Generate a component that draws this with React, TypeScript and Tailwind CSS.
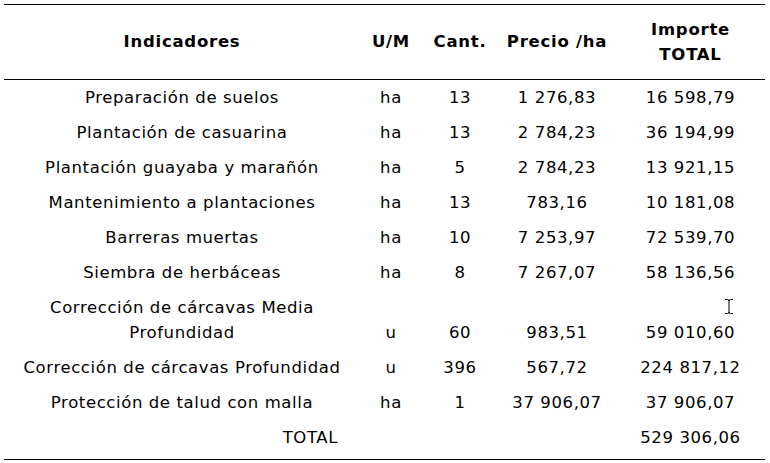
import React from "react";

const rows = [
  ["Preparación de suelos", "ha", "13", "1 276,83", "16 598,79"],
  ["Plantación de casuarina", "ha", "13", "2 784,23", "36 194,99"],
  ["Plantación guayaba y marañón", "ha", "5", "2 784,23", "13 921,15"],
  ["Mantenimiento a plantaciones", "ha", "13", "783,16", "10 181,08"],
  ["Barreras muertas", "ha", "10", "7 253,97", "72 539,70"],
  ["Siembra de herbáceas", "ha", "8", "7 267,07", "58 136,56"],
  ["Corrección de cárcavas Media Profundidad", "u", "60", "983,51", "59 010,60"],
  ["Corrección de cárcavas Profundidad", "u", "396", "567,72", "224 817,12"],
  ["Protección de talud con malla", "ha", "1", "37 906,07", "37 906,07"],
];

const grid = "grid grid-cols-[356px_62px_76px_118px_149px]";

export default function App() {
  return (
    <div className="relative w-[770px] h-[463px] bg-white pt-[4px] pl-[4px] text-black text-[16.5px] tracking-[0.6px] font-['Verdana','DejaVu_Sans',sans-serif]">
      <div className="w-[761px] border-t border-b border-black">
        <div className={`${grid} border-b border-black h-[75px] items-center text-center font-bold leading-[25px] tracking-[0.75px] pb-[1px]`}>
          <div>Indicadores</div>
          <div>U/M</div>
          <div>Cant.</div>
          <div>Precio /ha</div>
          <div>
            Importe
            <br />
            TOTAL
          </div>
        </div>
        {rows.map((r, i) => (
          <div key={i} className={`${grid} items-end text-center leading-[25px] py-[5px]`}>
            <div className={i === 6 ? "px-[30px]" : ""}>{r[0]}</div>
            <div>{r[1]}</div>
            <div>{r[2]}</div>
            <div>{r[3]}</div>
            <div>{r[4]}</div>
          </div>
        ))}
        <div className={`${grid} items-end text-center leading-[25px] pt-[5px] pb-[9px]`}>
          <div className="text-right pr-[22px]">TOTAL</div>
          <div />
          <div />
          <div />
          <div>529 306,06</div>
        </div>
      </div>
      <svg className="absolute left-[724px] top-[298px]" width="10" height="17" viewBox="0 0 10 17">
        <path d="M1 1.5h2.5M6.5 1.5H9M5 2.5v12M1 15.5h2.5M6.5 15.5H9M3.5 1.5Q5 1.5 5 3M6.5 1.5Q5 1.5 5 3M3.5 15.5Q5 15.5 5 14M6.5 15.5Q5 15.5 5 14" stroke="black" strokeWidth="1" fill="none" />
      </svg>
    </div>
  );
}
